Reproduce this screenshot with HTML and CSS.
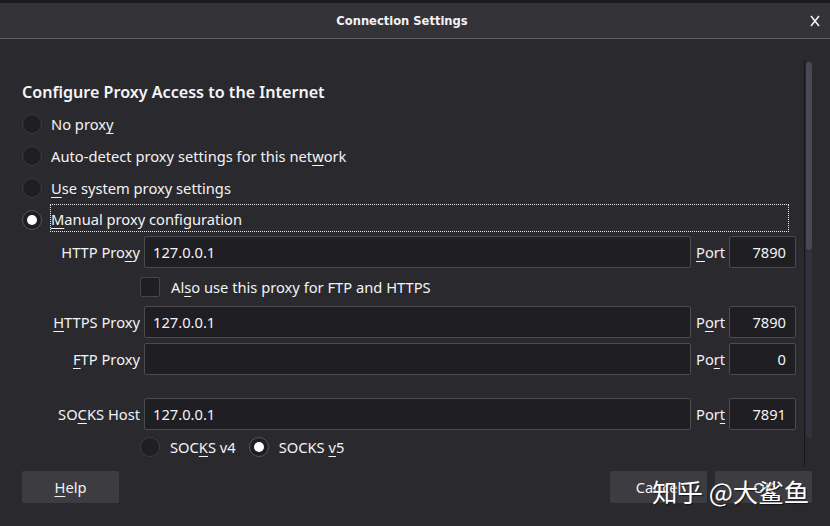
FILE: index.html
```html
<!DOCTYPE html>
<html>
<head>
<meta charset="utf-8">
<link rel="stylesheet" href="styles.css">
</head>
<body>
<div class="window">
  <div class="topstrip"></div>
  <header class="titlebar">
    <span class="title">Connection Settings</span>
    <svg class="close" width="10" height="12" viewBox="0 0 10 12"><path d="M1 1 L9 11 M9 1 L1 11" stroke="#f2f2f4" stroke-width="1.6" fill="none"/></svg>
  </header>
  <div class="scrollarea">
    <div class="content">
      <h1 class="heading">Configure Proxy Access to the Internet</h1>
      <div class="radio-row"><span class="radio"></span><span class="rlabel">No prox<u>y</u></span></div>
      <div class="radio-row"><span class="radio"></span><span class="rlabel">Auto-detect proxy settings for this net<u>w</u>ork</span></div>
      <div class="radio-row"><span class="radio"></span><span class="rlabel"><u>U</u>se system proxy settings</span></div>
      <div class="radio-row"><span class="radio checked"></span><span class="rlabel focus"><u>M</u>anual proxy configuration</span></div>

      <div class="field-row">
        <span class="flabel">HTTP Pro<u>x</u>y</span>
        <span class="input host">127.0.0.1</span>
        <span class="plabel"><u>P</u>ort</span>
        <span class="input port">7890</span>
      </div>
      <div class="check-row"><span class="checkbox"></span><span>Al<u>s</u>o use this proxy for FTP and HTTPS</span></div>
      <div class="field-row">
        <span class="flabel"><u>H</u>TTPS Proxy</span>
        <span class="input host">127.0.0.1</span>
        <span class="plabel">P<u>o</u>rt</span>
        <span class="input port">7890</span>
      </div>
      <div class="field-row gap5">
        <span class="flabel"><u>F</u>TP Proxy</span>
        <span class="input host"></span>
        <span class="plabel">Po<u>r</u>t</span>
        <span class="input port">0</span>
      </div>
      <div class="field-row socks">
        <span class="flabel">SO<u>C</u>KS Host</span>
        <span class="input host">127.0.0.1</span>
        <span class="plabel">Por<u>t</u></span>
        <span class="input port">7891</span>
      </div>
      <div class="version-row">
        <span class="radio"></span><span class="vlabel">SOC<u>K</u>S v4</span>
        <span class="radio checked"></span><span class="vlabel">SOCKS <u>v</u>5</span>
      </div>
    </div>
    <div class="scrollbar"><div class="thumb"></div></div>
  </div>
  <footer class="footer">
    <button class="btn"><u>H</u>elp</button>
    <span class="spacer"></span>
    <button class="btn">Cancel</button>
    <button class="btn">OK</button>
  </footer>
  <div class="watermark">知乎 @大鲨鱼</div>
</div>
</body>
</html>
```

FILE: styles.css
```css
html, body {
  margin: 0;
  padding: 0;
  background: #2a2a2e;
}
.window {
  position: relative;
  width: 830px;
  height: 526px;
  overflow: hidden;
  background: #2a2a2e;
  color: #f3f3f5;
  font-family: "Noto Sans", "DejaVu Sans", sans-serif;
  font-size: 14.7px;
}
u {
  text-decoration: underline;
  text-decoration-thickness: 1px;
  text-underline-offset: 3px;
}
.topstrip {
  height: 3px;
  background: #1b1a1f;
}
.titlebar {
  height: 35px;
  background: #333338;
  border-bottom: 1px solid #5c5c61;
  display: flex;
  align-items: center;
  justify-content: center;
  position: relative;
}
.title {
  font-family: "DejaVu Sans Condensed", "DejaVu Sans", sans-serif;
  font-stretch: condensed;
  font-weight: bold;
  font-size: 12.8px;
  color: #f2f2f4;
  margin-right: 26px;
}
.close {
  position: absolute;
  right: 10px;
  top: 12px;
}
.scrollarea {
  margin-top: 21px;
  height: 407px;
  display: flex;
  overflow: hidden;
}
.content {
  flex: 1;
  padding: 20px 8px 0 22px;
}
.heading {
  margin: 0 0 4px 0;
  height: 24px;
  line-height: 24px;
  font-size: 16.1px;
  font-weight: 600;
  color: #f6f6f8;
}
.radio-row {
  height: 32px;
  display: flex;
  align-items: center;
}
.radio {
  width: 18px;
  height: 18px;
  border-radius: 50%;
  border: 1px solid #3c3c41;
  background: #1f1f23;
  flex: none;
  position: relative;
}
.radio.checked {
  border-color: #55555b;
  background: #1f1f23;
}
.radio.checked::after {
  content: "";
  position: absolute;
  left: 4px;
  top: 4px;
  width: 10px;
  height: 10px;
  border-radius: 50%;
  background: #ffffff;
}
.rlabel {
  margin-left: 9px;
  line-height: 20px;
}
.rlabel.focus {
  flex: 1;
  height: 26px;
  line-height: 28px;
  outline: 1px dotted #e8e8ea;
  margin-top: -4px;
  margin-right: 8px;
  margin-left: 9px;
  padding-left: 0;
}
.field-row {
  display: flex;
  align-items: center;
  height: 32px;
}
.field-row.gap5 {
  margin-top: 5px;
}
.field-row.socks {
  margin-top: 23px;
}
.flabel {
  width: 118px;
  text-align: right;
  margin-right: 4px;
  flex: none;
}
.input {
  box-sizing: border-box;
  height: 32px;
  line-height: 30px;
  background: #1f1e22;
  border: 1px solid #4b4b50;
  border-radius: 2px;
  flex: none;
  color: #f3f3f5;
}
.input.host {
  width: 547px;
  padding-left: 8px;
}
.input.port {
  width: 67px;
  text-align: right;
  padding-right: 9px;
}
.plabel {
  width: 30px;
  margin: 0 3px 0 5px;
  flex: none;
}
.check-row {
  height: 38px;
  display: flex;
  align-items: center;
  padding-left: 118px;
}
.checkbox {
  box-sizing: border-box;
  width: 20px;
  height: 20px;
  border: 1px solid #45454a;
  background: #1f1f23;
  border-radius: 2px;
  margin-right: 11px;
  flex: none;
}
.version-row {
  height: 34px;
  display: flex;
  align-items: center;
  padding-left: 118px;
}
.vlabel {
  margin-left: 10px;
  margin-right: 13px;
}
.scrollbar {
  margin-right: 17px;
  border-left: 1px solid #17171a;
  padding-left: 1px;
  box-sizing: border-box;
  width: 9px;
}
.thumb {
  width: 6px;
  height: 188px;
  margin-top: 2px;
  border-radius: 3px;
  background: #474a56;
  box-shadow: 0 188px 0 0 #30323c;
}
.footer {
  margin-top: 4px;
  display: flex;
  padding: 0 18px 0 22px;
  gap: 8px;
}
.spacer {
  flex: 1;
}
.btn {
  width: 97px;
  height: 32px;
  background: #3c3c41;
  border: none;
  border-radius: 2px;
  color: #f0f0f2;
  font-family: "Noto Sans", "DejaVu Sans", sans-serif;
  font-size: 14.7px;
  padding: 0;
}
.watermark {
  position: absolute;
  left: 652px;
  top: 472px;
  font-family: "Noto Sans CJK SC", sans-serif;
  font-size: 25.5px;
  color: #ffffff;
  text-shadow: 1px 1px 1px rgba(0,0,0,0.6);
  white-space: nowrap;
}
```
